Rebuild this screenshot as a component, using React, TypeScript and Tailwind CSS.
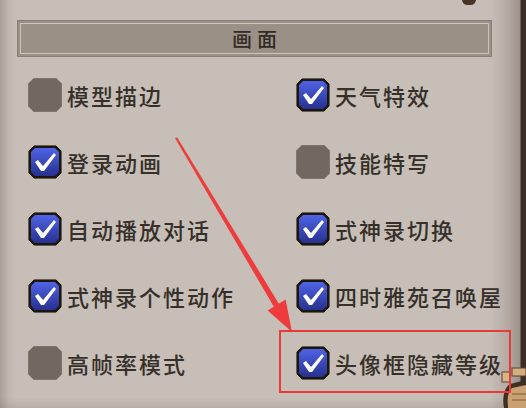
import React from 'react';

type Item = { label: string; on: boolean };

// 两列设置项（按行排列）
const ROWS: [Item, Item][] = [
  [{ label: '模型描边', on: false }, { label: '天气特效', on: true }],
  [{ label: '登录动画', on: true }, { label: '技能特写', on: false }],
  [{ label: '自动播放对话', on: true }, { label: '式神录切换', on: true }],
  [{ label: '式神录个性动作', on: true }, { label: '四时雅苑召唤屋', on: true }],
  [{ label: '高帧率模式', on: false }, { label: '头像框隐藏等级', on: true }],
];

const OCT = '6,0 28,0 34,6 34,28 28,34 6,34 0,28 0,6';

const Box: React.FC<{ on: boolean }> = ({ on }) => (
  <svg width="34" height="34" viewBox="0 0 34 34" className="shrink-0">
    <defs>
      <linearGradient id="blueFill" x1="0" y1="0" x2="0" y2="1">
        <stop offset="0" stopColor="#4f63e6" />
        <stop offset="1" stopColor="#27318f" />
      </linearGradient>
    </defs>
    {on ? (
      <>
        <polygon points={OCT} fill="#1c1610" stroke="#d9c7a6" strokeWidth="0.8" />
        <polygon points="7,3 27,3 31,7 31,27 27,31 7,31 3,27 3,7" fill="url(#blueFill)" />
        <polygon points="7,17 10,15 15,21 26,8 28,10 16,26 13,26" fill="#ffffff" />
      </>
    ) : (
      <polygon points={OCT} fill="#73685f" stroke="#8d8279" strokeWidth="1" />
    )}
  </svg>
);

const Option: React.FC<Item> = ({ label, on }) => (
  <div className="flex items-center h-[67px]">
    <Box on={on} />
    <span className="ml-[5px] text-[22px] leading-none tracking-[2px] text-[#36302a] font-medium">
      {label}
    </span>
  </div>
);

const App: React.FC = () => {
  return (
    <div
      className="relative w-[526px] h-[408px] overflow-hidden bg-[linear-gradient(to_right,#a99f97_0px,#bfb6ae_8px,#c7beb7_16px,#c7beb7_490px,#b4aaa2_508px,#9c928a_520px,#3c2e26_521px,#3c2e26_526px)]"
      style={{ fontFamily: '"Noto Sans CJK SC", "Noto Sans", sans-serif' }}
    >
      {/* 标题栏 */}
      <div className="pl-[17px] pt-[20px]">
        <div className="w-[475px] h-[37px] bg-[#9b9086] border border-[#8a7f76] p-[2px]">
          <div className="h-full border border-[#cdc4bb] flex items-center justify-center">
            <span className="text-[20px] leading-none tracking-[5px] pl-[5px] text-[#332b25] font-medium">画面</span>
          </div>
        </div>
      </div>

      {/* 选项 */}
      <div className="grid grid-cols-[268px_1fr] pl-[28px] mt-[4px]">
        {ROWS.map(([a, b], i) => (
          <React.Fragment key={i}>
            <Option {...a} />
            <Option {...b} />
          </React.Fragment>
        ))}
      </div>

      {/* 底部阴影 */}
      <div className="absolute left-0 right-[5px] bottom-0 h-[10px] bg-[linear-gradient(to_bottom,rgba(0,0,0,0),rgba(80,60,50,0.12))]" />

      {/* 顶部小饰物 */}
      <div className="absolute left-[462px] top-[-6px] w-[14px] h-[11px] rounded-full bg-[#4a3426]" />

      {/* 右下角卷轴 */}
      <svg className="absolute left-[498px] top-[366px]" width="28" height="42" viewBox="0 0 28 42">
        <path d="M6 42 C4 32 6 22 12 18 L28 14 L28 42 Z" fill="#3f2f22" />
        <path d="M10 40 C9 32 10 26 14 22 L28 19 L28 42 L10 42 Z" fill="#c9a173" />
        <rect x="14" y="2" width="14" height="8" fill="#d3ae7e" stroke="#5a4030" strokeWidth="1" />
        <rect x="4" y="6" width="8" height="10" fill="#d8b684" stroke="#5a4030" strokeWidth="1" />
        <path d="M14 28 L28 28 M14 34 L28 34" stroke="#7a5a3e" strokeWidth="1" />
      </svg>

      {/* 红色标注框 */}
      <div className="absolute left-[279px] top-[330px] w-[232px] h-[63px] border-[2.5px] border-[#e8393b]" />

      {/* 红色箭头 */}
      <svg className="absolute left-0 top-0 pointer-events-none" width="526" height="408" viewBox="0 0 526 408">
        <polygon points="175,138 177.2,137.4 279,304 274,307" fill="#ee3b3c" />
        <polygon points="292,332 285.6,299.4 267.6,310.4" fill="#ee3b3c" />
      </svg>
    </div>
  );
};

export default App;
